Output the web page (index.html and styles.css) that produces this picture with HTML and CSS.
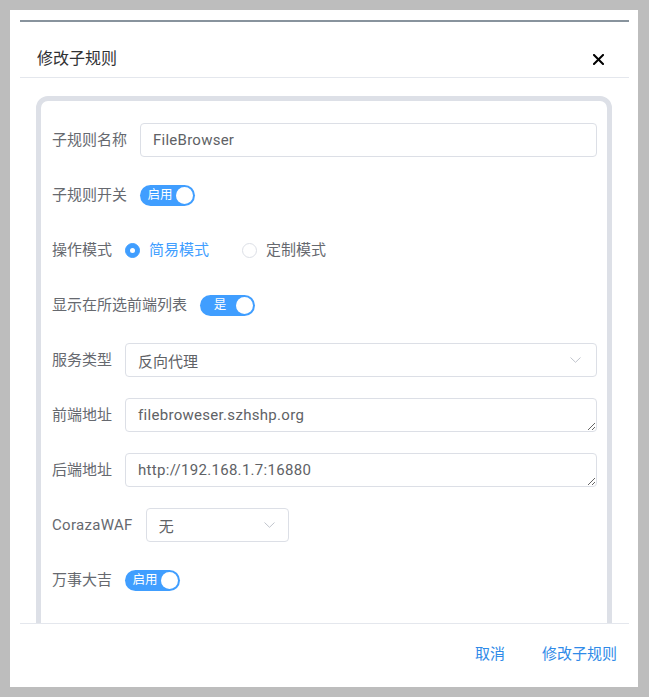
FILE: index.html
```html
<!DOCTYPE html>
<html lang="zh-CN">
<head>
<meta charset="utf-8">
<title>修改子规则</title>
<link rel="stylesheet" href="styles.css">
</head>
<body>
<div class="modal">
  <div class="dialog">
    <div class="header">
      <span class="title">修改子规则</span>
      <button class="close" aria-label="关闭">
        <svg width="11" height="11" viewBox="0 0 11 11"><path d="M1 1L10 10M10 1L1 10" stroke="#000" stroke-width="2" stroke-linecap="square" fill="none"/></svg>
      </button>
    </div>
    <div class="body">
      <div class="card">
        <div class="row">
          <span class="lbl">子规则名称</span>
          <input class="input grow" value="FileBrowser">
        </div>
        <div class="row">
          <span class="lbl">子规则开关</span>
          <span class="switch"><span class="switch-text">启用</span><span class="knob"></span></span>
        </div>
        <div class="row">
          <span class="lbl">操作模式</span>
          <span class="radio checked"><span class="dot"></span><span class="radio-text">简易模式</span></span>
          <span class="radio"><span class="dot"></span><span class="radio-text">定制模式</span></span>
        </div>
        <div class="row">
          <span class="lbl">显示在所选前端列表</span>
          <span class="switch"><span class="switch-text">是</span><span class="knob"></span></span>
        </div>
        <div class="row">
          <span class="lbl">服务类型</span>
          <div class="select grow"><span>反向代理</span>
            <svg width="11" height="6" viewBox="0 0 11 6"><path d="M0.5 0.5L5.5 5.3L10.5 0.5" stroke="#c0c4cc" stroke-width="1" fill="none"/></svg>
          </div>
        </div>
        <div class="row">
          <span class="lbl">前端地址</span>
          <textarea class="textarea grow">filebroweser.szhshp.org</textarea>
        </div>
        <div class="row">
          <span class="lbl">后端地址</span>
          <textarea class="textarea grow">http://192.168.1.7:16880</textarea>
        </div>
        <div class="row">
          <span class="lbl latin">CorazaWAF</span>
          <div class="select waf"><span>无</span>
            <svg width="11" height="6" viewBox="0 0 11 6"><path d="M0.5 0.5L5.5 5.3L10.5 0.5" stroke="#c0c4cc" stroke-width="1" fill="none"/></svg>
          </div>
        </div>
        <div class="row">
          <span class="lbl">万事大吉</span>
          <span class="switch"><span class="switch-text">启用</span><span class="knob"></span></span>
        </div>
      </div>
    </div>
    <div class="footer">
      <button class="link">取消</button>
      <button class="link">修改子规则</button>
    </div>
  </div>
</div>
</body>
</html>
```

FILE: styles.css
```css
* { box-sizing: border-box; }
html, body { margin: 0; padding: 0; }
body {
  background: #bdbdbd;
  font-family: Roboto, "Noto Sans CJK SC", sans-serif;
  color: #606266;
  width: 649px;
  height: 697px;
  overflow: hidden;
}
.modal {
  margin: 10px 0 0 10px;
  width: 628px;
  height: 677px;
  background: #fff;
  padding: 10px 9px 0 10px;
  display: flex;
}
.dialog {
  flex: 1;
  border-top: 2px solid #88939d;
  display: flex;
  flex-direction: column;
  min-height: 0;
}
.header {
  display: flex;
  align-items: center;
  justify-content: space-between;
  padding: 26px 25px 7px 17px;
  border-bottom: 1px solid #e4e7ed;
}
.title {
  font-size: 16px;
  line-height: 22px;
  color: #303133;
}
.close {
  border: none;
  background: none;
  padding: 0;
  width: 11px;
  height: 11px;
  display: flex;
}
.body {
  flex: 1;
  overflow: hidden;
  padding: 18px 17px 0 16px;
  min-height: 0;
}
.card {
  border: 5px solid #dde0e7;
  border-radius: 12px;
  padding: 22px 10px 60px 11px;
  display: flex;
  flex-direction: column;
  gap: 21px;
}
.row {
  display: flex;
  align-items: center;
  height: 34px;
}
.lbl {
  font-size: 15px;
  line-height: 20px;
  color: #66696f;
  margin-right: 13px;
  white-space: nowrap;
}
.lbl.latin { letter-spacing: 0.3px; }
.grow { flex: 1; }
.input, .textarea, .select {
  height: 34px;
  border: 1px solid #dcdfe6;
  border-radius: 4px;
  font-family: Roboto, "Noto Sans CJK SC", sans-serif;
  font-size: 15px;
  color: #606266;
  background: #fff;
}
.input {
  padding: 0 12px;
  outline: none;
  letter-spacing: 0.25px;
}
.textarea {
  padding: 7px 12px;
  line-height: 18px;
  resize: vertical;
  outline: none;
  overflow: hidden;
  min-width: 0;
  letter-spacing: 0.3px;
}
.select {
  display: flex;
  align-items: center;
  justify-content: space-between;
  padding: 0 15px 0 12px;
}
.select svg { display: block; }
.waf { width: 143px; padding-right: 13px; }
.switch {
  width: 55px;
  height: 21px;
  border-radius: 11px;
  background: #409eff;
  display: flex;
  align-items: center;
  padding: 0 2px 0 4px;
}
.switch-text {
  flex: 1;
  text-align: center;
  color: #fff;
  font-size: 12.5px;
  line-height: 16px;
}
.knob {
  width: 17px;
  height: 17px;
  border-radius: 50%;
  background: #fff;
}
.radio {
  display: flex;
  align-items: center;
  margin-right: 33px;
}
.dot {
  width: 15px;
  height: 15px;
  border-radius: 50%;
  border: 1px solid #dcdfe6;
  background: #fff;
  display: flex;
  align-items: center;
  justify-content: center;
}
.radio.checked .dot {
  background: #409eff;
  border-color: #409eff;
}
.radio.checked .dot::after {
  content: "";
  width: 5px;
  height: 5px;
  border-radius: 50%;
  background: #fff;
}
.radio-text {
  margin-left: 9px;
  font-size: 15px;
  line-height: 20px;
  color: #66696f;
}
.radio.checked .radio-text { color: #409eff; }
.footer {
  border-top: 1px solid #e4e7ed;
  display: flex;
  justify-content: flex-end;
  gap: 37px;
  padding: 19px 12px 22px 0;
}
.link {
  border: none;
  background: none;
  padding: 0;
  font-family: Roboto, "Noto Sans CJK SC", sans-serif;
  font-size: 15px;
  line-height: 22px;
  color: #2f8ae8;
}
```
